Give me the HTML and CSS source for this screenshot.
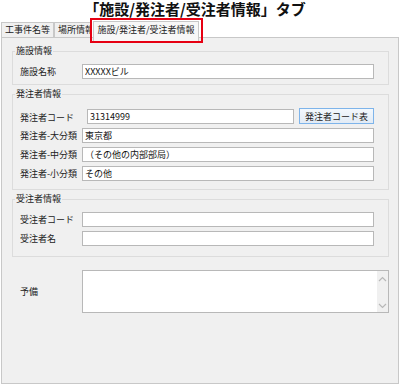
FILE: index.html
```html
<!DOCTYPE html>
<html lang="ja">
<head>
    <meta charset="UTF-8">
    <meta name="viewport" content="width=device-width, initial-scale=1.0">
    <title>施設/発注者/受注者情報</title>
    <link rel="stylesheet" href="styles.css">
</head>
<body>
    <h1 class="caption">「施設/発注者/受注者情報」タブ</h1>
    <div class="tabs">
        <div class="tab">工事件名等</div>
        <div class="tab tab-cut">場所情報</div>
        <div class="tab-mark">
            <div class="tab tab-active">施設/発注者/受注者情報</div>
        </div>
    </div>
    <div class="panel">
        <fieldset class="group group-first">
            <legend>施設情報</legend>
            <div class="row">
                <label>施設名称</label>
                <input type="text" value="XXXXXビル">
            </div>
        </fieldset>
        <fieldset class="group group-order">
            <legend>発注者情報</legend>
            <div class="row row-btn">
                <label>発注者コード</label>
                <input type="text" value="31314999">
                <button>発注者コード表</button>
            </div>
            <div class="row">
                <label>発注者-大分類</label>
                <input type="text" value="東京都">
            </div>
            <div class="row">
                <label>発注者-中分類</label>
                <input type="text" value="（その他の内部部局）">
            </div>
            <div class="row">
                <label>発注者-小分類</label>
                <input type="text" value="その他">
            </div>
        </fieldset>
        <fieldset class="group group-recv">
            <legend>受注者情報</legend>
            <div class="row">
                <label>受注者コード</label>
                <input type="text" value="">
            </div>
            <div class="row">
                <label>受注者名</label>
                <input type="text" value="">
            </div>
        </fieldset>
        <div class="row memo-row">
            <label>予備</label>
            <div class="memo">
                <textarea></textarea>
                <div class="scroll">
                    <svg width="9" height="6" viewBox="0 0 9 6"><path d="M1 5 L4.5 1.5 L8 5" fill="none" stroke="#b8b8b8" stroke-width="1.2"/></svg>
                    <svg width="9" height="6" viewBox="0 0 9 6"><path d="M1 1 L4.5 4.5 L8 1" fill="none" stroke="#b8b8b8" stroke-width="1.2"/></svg>
                </div>
            </div>
        </div>
    </div>
</body>
</html>
```

FILE: styles.css
```css
body {
    margin: 0;
    background: #fff;
    font-family: "Noto Sans CJK JP", "Noto Sans", sans-serif;
    font-size: 9px;
    color: #222;
    width: 400px;
}
.caption {
    margin: 0;
    line-height: 18px;
    font-size: 15px;
    font-weight: bold;
    text-align: center;
    color: #111;
    padding-right: 10px;
}
.tabs {
    display: flex;
    align-items: flex-end;
    height: 19px;
    padding-left: 1px;
}
.tab {
    box-sizing: border-box;
    height: 15px;
    line-height: 13px;
    padding: 0 3px;
    border: 1px solid #c8c8c8;
    border-bottom: none;
    background: #f0f0f0;
    white-space: nowrap;
    overflow: hidden;
}
.tab-cut {
    width: 36px;
    padding-right: 0;
    border-right: none;
}
.tab-mark {
    box-sizing: border-box;
    align-self: flex-start;
    position: relative;
    z-index: 1;
    width: 113px;
    height: 25px;
    margin-bottom: -6px;
    padding: 1px 2px 0 1px;
    border: 2px solid #e60012;
}
.tab-active {
    height: 20px;
    line-height: 16px;
    padding: 0;
    text-align: center;
    background: #f7f7f7;
}
.panel {
    box-sizing: border-box;
    height: 347px;
    margin: 0 1px;
    padding: 0 9px 0 10px;
    border: 1px solid #c8c8c8;
    background: #f0f0f0;
}
.group {
    margin: 3px 0 0;
    padding: 7px 14px 5px 0;
    border: 1px solid #dcdcdc;
    min-width: 0;
    display: flex;
    flex-direction: column;
    gap: 4px;
}
.group legend {
    margin-left: 2px;
    padding: 0 1px;
    line-height: 12px;
    font-size: 9px;
}
.group-first {
    margin-top: 7px;
}
.group-order {
    padding-top: 8px;
    padding-bottom: 8px;
}
.group-recv {
    padding-bottom: 10px;
}
.row {
    display: grid;
    grid-template-columns: 62px 1fr;
    align-items: center;
    height: 15px;
    padding-left: 7px;
}
.row label {
    white-space: nowrap;
}
.row input {
    box-sizing: border-box;
    width: 100%;
    height: 15px;
    margin: 0;
    padding: 0 2px;
    border: 1px solid #b8b8b8;
    background: #fff;
    font: inherit;
    font-size: 9px;
    color: #111;
}
.row-btn {
    grid-template-columns: 62px 1fr 75px;
    column-gap: 5px;
    height: 16px;
    align-items: end;
}
.row-btn button {
    box-sizing: border-box;
    height: 16px;
    margin: 0;
    padding: 0;
    border: 1px solid #7eb4ea;
    background: linear-gradient(#f3f8fd, #e2ebf5);
    font: inherit;
    font-size: 9px;
    color: #222;
}
.memo-row {
    height: 43px;
    margin-top: 13px;
    padding-left: 8px;
}
.memo {
    box-sizing: border-box;
    height: 43px;
    display: flex;
    border: 1px solid #b8b8b8;
    background: #fff;
}
.memo textarea {
    flex: 1;
    border: none;
    resize: none;
    outline: none;
    background: transparent;
}
.scroll {
    width: 11px;
    background: #f0f0f0;
    display: flex;
    flex-direction: column;
    justify-content: space-between;
    align-items: center;
    padding: 5px 0 3px;
}
```
